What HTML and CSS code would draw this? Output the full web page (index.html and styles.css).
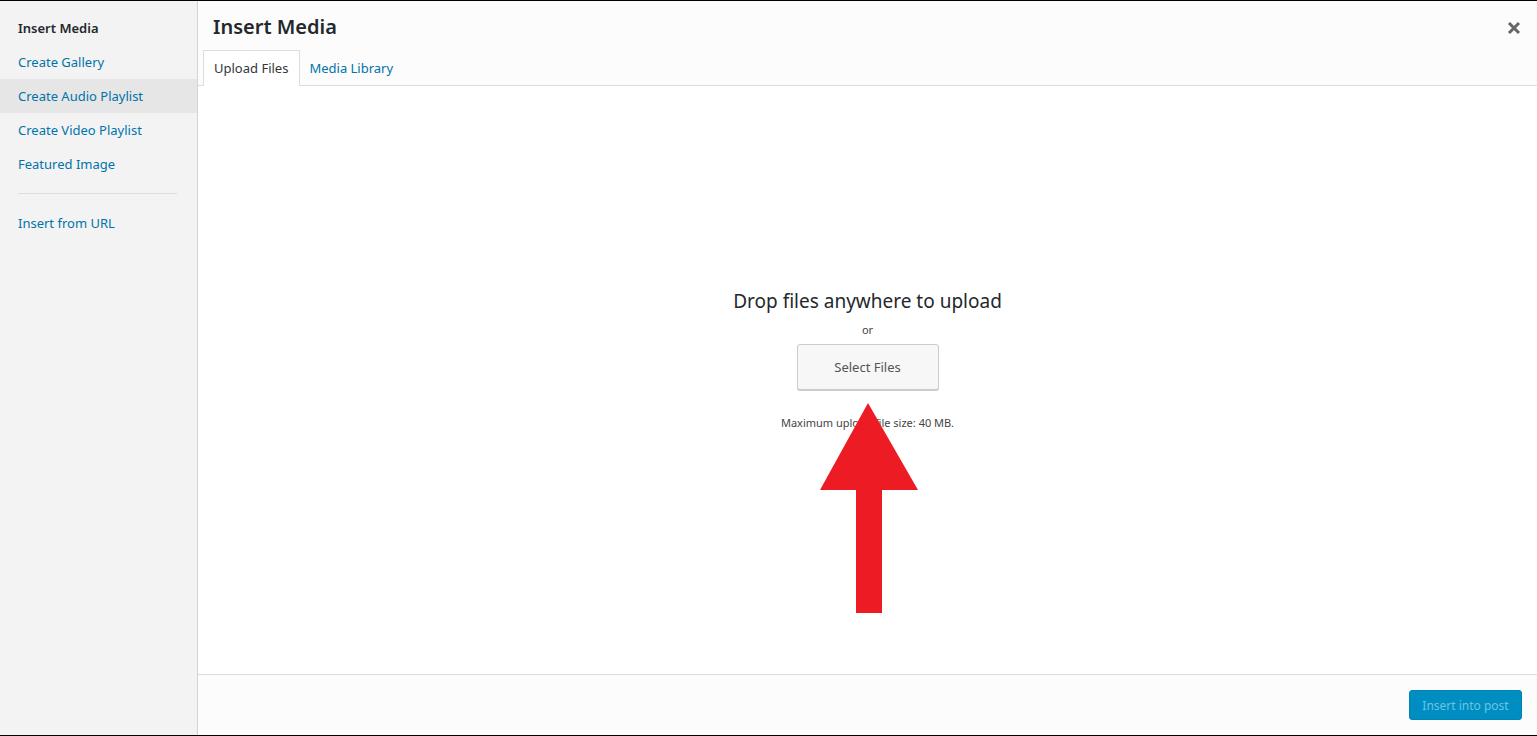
FILE: index.html
```html
<!DOCTYPE html>
<html>
<head>
<meta charset="utf-8">
<link rel="stylesheet" href="styles.css">
</head>
<body>
<div class="modal">
  <aside class="menu">
    <div class="menu-item active">Insert Media</div>
    <a class="menu-item">Create Gallery</a>
    <a class="menu-item hover">Create Audio Playlist</a>
    <a class="menu-item">Create Video Playlist</a>
    <a class="menu-item">Featured Image</a>
    <div class="separator"></div>
    <a class="menu-item">Insert from URL</a>
  </aside>
  <main class="frame">
    <header class="frame-header">
      <h1 class="title">Insert Media</h1>
      <button class="close" aria-label="Close">
        <svg width="14" height="14" viewBox="0 0 14 14"><path d="M2 2 L12 12 M12 2 L2 12" stroke="#666" stroke-width="3" stroke-linecap="butt"/></svg>
      </button>
      <nav class="tabs">
        <span class="tab current">Upload Files</span>
        <span class="tab">Media Library</span>
      </nav>
    </header>
    <section class="content">
      <div class="uploader">
        <p class="drop">Drop files anywhere to upload</p>
        <p class="or">or</p>
        <button class="select">Select Files</button>
        <p class="max">Maximum upload file size: 40 MB.</p>
      </div>
      <svg class="arrow" width="100" height="212" viewBox="0 0 100 212">
        <polygon points="48,0 98,87 62,87 62,210 36,210 36,87 0,87" fill="#ed1c24"/>
      </svg>
    </section>
    <footer class="toolbar">
      <button class="insert">Insert into post</button>
    </footer>
  </main>
</div>
</body>
</html>
```
FILE: styles.css
```css
html, body {
  margin: 0;
  padding: 0;
  height: 100%;
  background: #000;
}
body {
  font-family: "Noto Sans", "Open Sans", sans-serif;
  font-size: 13px;
  color: #23282d;
}
.modal {
  display: flex;
  height: 734px;
  margin-top: 1px;
  background: #fff;
}
.menu {
  width: 197px;
  flex: none;
  background: #f3f3f3;
  border-right: 1px solid #d4d4d4;
  padding-top: 10px;
  box-sizing: content-box;
}
.menu-item {
  display: block;
  height: 34px;
  line-height: 34px;
  padding: 0 18px;
  color: #0073aa;
  font-size: 13px;
  white-space: nowrap;
}
.menu-item.active {
  color: #23282d;
  font-weight: 600;
}
.menu-item.hover {
  background: #e6e6e6;
}
.separator {
  height: 1px;
  background: #ddd;
  margin: 12px 20px 12px 18px;
}
.frame {
  flex: 1;
  display: flex;
  flex-direction: column;
  min-width: 0;
}
.frame-header {
  position: relative;
  background: #fcfcfc;
  border-bottom: 1px solid #ddd;
  height: 84px;
  display: flex;
  flex-direction: column;
}
.title {
  margin: 0;
  padding: 0 15px;
  height: 49px;
  line-height: 52px;
  font-size: 20px;
  font-weight: 600;
  color: #23282d;
}
.close {
  position: absolute;
  right: 16px;
  top: 20px;
  border: 0;
  background: none;
  padding: 0;
  width: 14px;
  height: 14px;
}
.close svg { display: block; }
.tabs {
  display: flex;
  padding-left: 5px;
  margin-top: 0;
}
.tab {
  display: block;
  height: 35px;
  line-height: 35px;
  padding: 0 10px 0 8px;
  font-size: 13px;
  color: #0073aa;
  border: 1px solid transparent;
  border-bottom: 0;
}
.tab.current {
  background: #fff;
  border-color: #ddd;
  color: #32373c;
  height: 36px;
  margin-bottom: -1px;
  padding: 0 11px 0 10px;
}
.content {
  flex: 1;
  position: relative;
  background: #fff;
  display: flex;
  justify-content: center;
}
.uploader {
  text-align: center;
  padding-top: 202px;
}
.drop {
  margin: 0;
  font-size: 19px;
  line-height: 26px;
  color: #23282d;
}
.or {
  margin: 7px 0 0;
  font-size: 11px;
  line-height: 18px;
  color: #444;
}
.select {
  margin-top: 5px;
  width: 142px;
  height: 46px;
  font-family: inherit;
  font-size: 13px;
  color: #555;
  background: #f7f7f7;
  border: 1px solid #ccc;
  border-radius: 3px;
  box-shadow: 0 1px 0 #ccc;
}
.max {
  margin: 25px 0 0;
  font-size: 11px;
  line-height: 16px;
  color: #444;
}
.arrow {
  position: absolute;
  left: 622px;
  top: 317px;
}
.toolbar {
  height: 60px;
  background: #fcfcfc;
  border-top: 1px solid #ddd;
  display: flex;
  justify-content: flex-end;
  align-items: center;
  padding-right: 15px;
}
.insert {
  width: 113px;
  height: 30px;
  background: #008ec2;
  border: 1px solid #0083b5;
  border-radius: 3px;
  color: #66c6e4;
  font-family: inherit;
  font-size: 12px;
}
```
